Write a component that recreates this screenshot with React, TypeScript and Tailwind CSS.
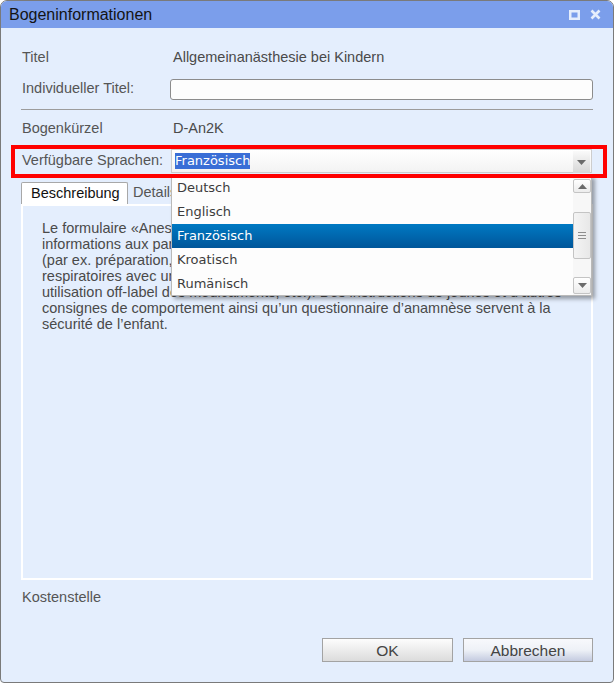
import React from 'react'

const languages = ['Deutsch', 'Englisch', 'Französisch', 'Kroatisch', 'Rumänisch']

const descriptionLines = [
    'Le formulaire «Anesthésie générale chez l’enfant» fournit des',
    'informations aux parents sur le déroulement de l’anesthésie générale',
    '(par ex. préparation, anesthésie par masque ou perfusion, sécurisation des voies',
    'respiratoires avec un masque laryngé ou un tube) et sur les risques (par ex.',
    'utilisation off-label des médicaments, etc.). Des instructions de jeûnes et d’autres',
    'consignes de comportement ainsi qu’un questionnaire d’anamnèse servent à la',
    'sécurité de l’enfant.',
]

function Triangle({ up = false }: { up?: boolean }) {
    return (
        <svg width="9" height="5" viewBox="0 0 9 5" className={up ? 'rotate-180' : ''}>
            <path d="M0 0 H9 L4.5 5 Z" fill="#6b6b6b" />
        </svg>
    )
}

function LanguageDropdown() {
    return (
        <div className="absolute left-[-1px] right-[-1px] top-[25px] z-10 flex h-[121px] border border-[#b9b9b9] bg-[#fdfdfd] shadow-[3px_3px_4px_rgba(0,0,0,0.35)]">
            <ul className="flex-1">
                {languages.map((lang) => (
                    <li
                        key={lang}
                        className={
                            lang === 'Französisch'
                                ? 'flex h-[24px] items-center bg-gradient-to-b from-[#0079c3] to-[#00569a] pl-[5px] text-white'
                                : 'flex h-[24px] items-center pl-[5px] text-[#3c3c3c]'
                        }
                    >
                        {lang}
                    </li>
                ))}
            </ul>
            <div className="flex w-[18px] flex-col bg-[#f7f7f7] pt-[3px] pb-[1px]">
                <div className="flex h-[14px] items-center justify-center rounded-[2px] border border-[#c4c4c4] bg-gradient-to-b from-white to-[#ececec]">
                    <Triangle up />
                </div>
                <div className="mt-[19px] flex h-[47px] flex-col items-center justify-center gap-[2px] rounded-[2px] border border-[#c4c4c4] bg-gradient-to-r from-[#f4f4f4] to-[#e8e8e8]">
                    <span className="h-px w-[8px] bg-[#8d8d8d]" />
                    <span className="h-px w-[8px] bg-[#8d8d8d]" />
                    <span className="h-px w-[8px] bg-[#8d8d8d]" />
                </div>
                <div className="mt-auto flex h-[17px] items-center justify-center rounded-[2px] border border-[#c4c4c4] bg-gradient-to-b from-white to-[#ececec]">
                    <Triangle />
                </div>
            </div>
        </div>
    )
}

export default function App() {
    return (
        <div className="flex h-[683px] w-[614px] flex-col overflow-hidden rounded-t-[7px] rounded-b-[4px] border border-[#7a7a7a] bg-[#e4eefd] font-['Liberation_Sans',Arial,sans-serif] text-[14.5px] text-[#555]">
            {/* title bar */}
            <div className="flex h-[27px] shrink-0 items-center bg-[#7b9eeb] pl-[8px] pr-[12px]">
                <span className="flex-1 text-[16px] text-[#141414]">Bogeninformationen</span>
                <svg width="11" height="10" viewBox="0 0 11 10" className="mr-[10px]">
                    <rect x="1.25" y="1.25" width="8.5" height="7.5" fill="none" stroke="#e6eefc" strokeWidth="2.5" />
                </svg>
                <svg width="11" height="11" viewBox="0 0 11 11">
                    <path d="M1.5 1.5 L9.5 9.5 M9.5 1.5 L1.5 9.5" stroke="#e6eefc" strokeWidth="2.6" />
                </svg>
            </div>

            <div className="flex flex-1 flex-col px-[20px] pb-[20px]">
                <div className="mt-[19px] flex h-[22px] items-center">
                    <span className="w-[152px] pl-px">Titel</span>
                    <span className="text-[#4a4a4a]">Allgemeinanästhesie bei Kindern</span>
                </div>
                <div className="mt-[9px] flex h-[22px] items-center">
                    <span className="w-[149px] pl-px">Individueller Titel:</span>
                    <div className="mt-px h-[21px] flex-1 rounded-[3px] border border-[#8c8c8c] bg-[#fdfdfd]" />
                </div>
                <div className="mt-[9px] h-px bg-[#9c9c9c]" />
                <div className="mt-[8px] flex h-[22px] items-center">
                    <span className="w-[152px] pl-px">Bogenkürzel</span>
                    <span className="text-[#4a4a4a]">D-An2K</span>
                </div>

                {/* language row, with the red marker laid over it */}
                <div className="relative mt-[9px] flex h-[25px] items-start">
                    <span className="flex h-[24px] w-[150px] items-center pl-px">Verfügbare Sprachen:</span>
                    <div className="relative mr-[1px] h-[24px] flex-1 border border-[#cdcdcd] bg-gradient-to-b from-white to-[#f3f3f3] font-['DejaVu_Sans',Verdana,sans-serif] text-[13px]">
                        <div className="flex h-full items-center pl-[3px]">
                            <span className="bg-[#3a6ed6] leading-[16px] text-white">Französisch</span>
                        </div>
                        <div className="absolute top-px right-px flex h-[22px] w-[17px] items-center justify-center bg-gradient-to-b from-[#fafafa] to-[#d6d6d6]">
                            <Triangle />
                        </div>
                        <LanguageDropdown />
                    </div>
                    <div className="pointer-events-none absolute top-[-4px] right-[-14px] bottom-[-4px] left-[-10px] z-20 border-4 border-[#ff0000]" />
                </div>

                {/* tabs */}
                <div className="mt-[8px] flex h-[22px] items-end">
                    <div className="flex h-[22px] w-[107px] items-center rounded-t-[2px] border border-b-0 border-[#a8a8a8] bg-white pl-[9px] text-[#111]">
                        Beschreibung
                    </div>
                    <div className="flex h-[22px] items-center pl-[5px] text-[#555]">Details</div>
                </div>
                <div className="h-[376px] border-2 border-white pt-[14px] pl-[19px] leading-[16px] text-[#4a4a4a]">
                    {descriptionLines.map((line) => (
                        <div key={line}>{line}</div>
                    ))}
                </div>

                <div className="mt-[10px] flex h-[16px] items-center pl-px">Kostenstelle</div>

                <div className="mt-auto flex justify-end gap-[10px]">
                    <button className="h-[24px] w-[131px] border border-[#a3a3a3] bg-gradient-to-b from-[#fdfdfd] to-[#dcdcdc] text-[15.5px] text-[#444]">
                        OK
                    </button>
                    <button className="h-[24px] w-[130px] border border-[#a3a3a3] bg-gradient-to-b from-[#f8f9fc] via-[#eef1f7] to-[#c4cbe0] text-[15.5px] text-[#444]">
                        Abbrechen
                    </button>
                </div>
            </div>
        </div>
    )
}
